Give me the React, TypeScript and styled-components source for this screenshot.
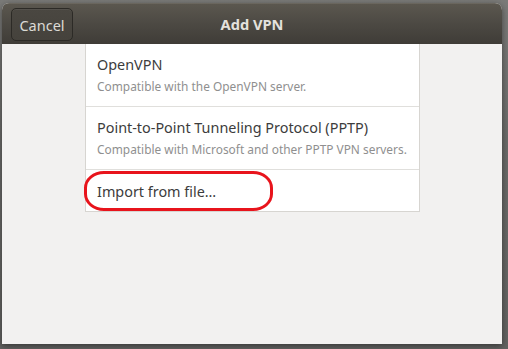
import React from "react";
import styled, { createGlobalStyle } from "styled-components";

const Global = createGlobalStyle`
  html, body { margin: 0; padding: 0; }
  body {
    width: 508px;
    height: 349px;
    overflow: hidden;
    background: linear-gradient(180deg, #7a7a78 0%, #6a6a68 40%, #626260 100%);
    font-family: "Noto Sans", "DejaVu Sans", sans-serif;
  }
`;

const Window = styled.div`
  margin: 3px 0 0 2px;
  width: 500px;
  height: 341px;
  display: flex;
  flex-direction: column;
  background: #f2f1f0;
  border-radius: 7px 7px 0 0;
  overflow: hidden;
  box-shadow: 0 2px 6px rgba(0, 0, 0, 0.45);
`;

const HeaderBar = styled.div`
  height: 41px;
  flex: none;
  display: grid;
  grid-template-columns: 1fr auto 1fr;
  align-items: center;
  padding: 0 9px;
  background: linear-gradient(180deg, #5b574f 0%, #4c4943 50%, #3f3c37 100%);
  border-top: 1px solid #6a665e;
  box-sizing: border-box;
`;

const CancelButton = styled.button`
  justify-self: start;
  width: 62px;
  height: 33px;
  margin-top: 1px;
  border: 1px solid #2c2a26;
  border-radius: 5px;
  background: linear-gradient(180deg, #4a4741 0%, #45423c 100%);
  box-shadow: inset 0 1px 0 rgba(255, 255, 255, 0.06);
  color: #dcdad5;
  font-family: inherit;
  font-size: 14.5px;
  padding: 0;
`;

const Title = styled.div`
  color: #e4e2dd;
  font-size: 14.6px;
  font-weight: 700;
`;

const Body = styled.div`
  flex: 1;
  display: flex;
  justify-content: flex-start;
  padding-left: 83px;
`;

const List = styled.div`
  width: 335px;
  height: 168px;
  box-sizing: border-box;
  background: #ffffff;
  border: 1px solid #d7d5d1;
  border-top: none;
  display: flex;
  flex-direction: column;
`;

const Row = styled.div<{ $h: number; $last?: boolean; $shift?: number }>`
  height: ${(p) => p.$h}px;
  flex: none;
  box-sizing: border-box;
  padding: ${(p) => p.$shift ?? 0}px 0 0 11px;
  display: flex;
  flex-direction: column;
  justify-content: center;
  border-bottom: ${(p) => (p.$last ? "none" : "1px solid #e0dfdc")};
  position: relative;
`;

const RowTitle = styled.div`
  color: #3c3c3c;
  font-size: 14.4px;
  line-height: 18px;
`;

const RowSub = styled.div`
  color: #8f8f8f;
  font-size: 11.9px;
  line-height: 16px;
  margin-top: 4px;
`;

const Highlight = styled.div`
  position: absolute;
  left: -2px;
  top: 1px;
  width: 189px;
  height: 40px;
  box-sizing: border-box;
  border: 3.5px solid #e8141c;
  border-radius: 20px / 17px;
  pointer-events: none;
`;

export default function App() {
  return (
    <>
      <Global />
      <Window>
        <HeaderBar>
          <CancelButton>Cancel</CancelButton>
          <Title>Add VPN</Title>
          <span />
        </HeaderBar>
        <Body>
          <List>
            <Row $h={63}>
              <RowTitle>OpenVPN</RowTitle>
              <RowSub>Compatible with the OpenVPN server.</RowSub>
            </Row>
            <Row $h={63}>
              <RowTitle>Point-to-Point Tunneling Protocol (PPTP)</RowTitle>
              <RowSub>Compatible with Microsoft and other PPTP VPN servers.</RowSub>
            </Row>
            <Row $h={41} $last $shift={3}>
              <RowTitle>Import from file…</RowTitle>
              <Highlight />
            </Row>
          </List>
        </Body>
      </Window>
    </>
  );
}
